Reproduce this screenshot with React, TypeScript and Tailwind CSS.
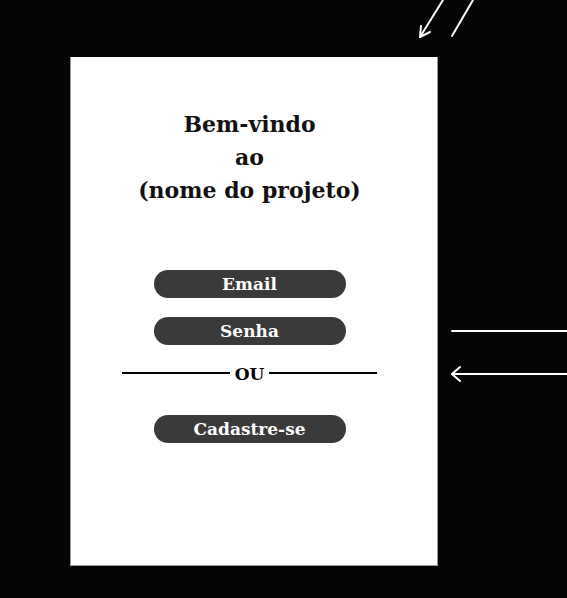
import React from "react";

const serif = { fontFamily: '"DejaVu Serif", "Liberation Serif", serif' };

function Pill({ label }: { label: string }) {
  return (
    <div className="w-[192px] h-[28px] rounded-full bg-[#3a3a3a] flex items-center justify-center text-white font-bold text-[17px] leading-none">
      {label}
    </div>
  );
}

export default function App() {
  return (
    <div className="relative w-[567px] h-[598px] bg-[#050505] overflow-hidden" style={serif}>
      <div className="ml-[70px] pt-[57px]">
        <div className="w-[368px] h-[509px] bg-white border-x border-b border-[#9a9a9a] flex flex-col items-center pt-[51px] pr-[9px]">
          <div className="text-center text-[#111] font-bold text-[22px] leading-[33px]">
            <div>Bem-vindo</div>
            <div>ao</div>
            <div>(nome do projeto)</div>
          </div>
          <div className="mt-[63px]">
            <Pill label="Email" />
          </div>
          <div className="mt-[19px]">
            <Pill label="Senha" />
          </div>
          <div className="mt-[18px] w-[255px] h-[20px] flex items-center gap-[5px]">
            <div className="flex-1 h-[2px] bg-black" />
            <span className="font-bold text-[17px] leading-none text-black pt-[3px]">OU</span>
            <div className="flex-1 h-[2px] bg-black" />
          </div>
          <div className="mt-[32px]">
            <Pill label="Cadastre-se" />
          </div>
        </div>
      </div>
      <svg
        className="absolute inset-0 pointer-events-none"
        width="567"
        height="598"
        viewBox="0 0 567 598"
        fill="none"
        stroke="white"
        strokeWidth="2"
        strokeLinecap="round"
        strokeLinejoin="round"
      >
        <path d="M443 0 L420 37" />
        <path d="M420 37 L421 26 M420 37 L430 32" />
        <path d="M473 0 L452 36" />
        <path d="M452 331 L567 331" />
        <path d="M452 374 L567 374" />
        <path d="M460 367 L452 374 L460 381" />
      </svg>
    </div>
  );
}
